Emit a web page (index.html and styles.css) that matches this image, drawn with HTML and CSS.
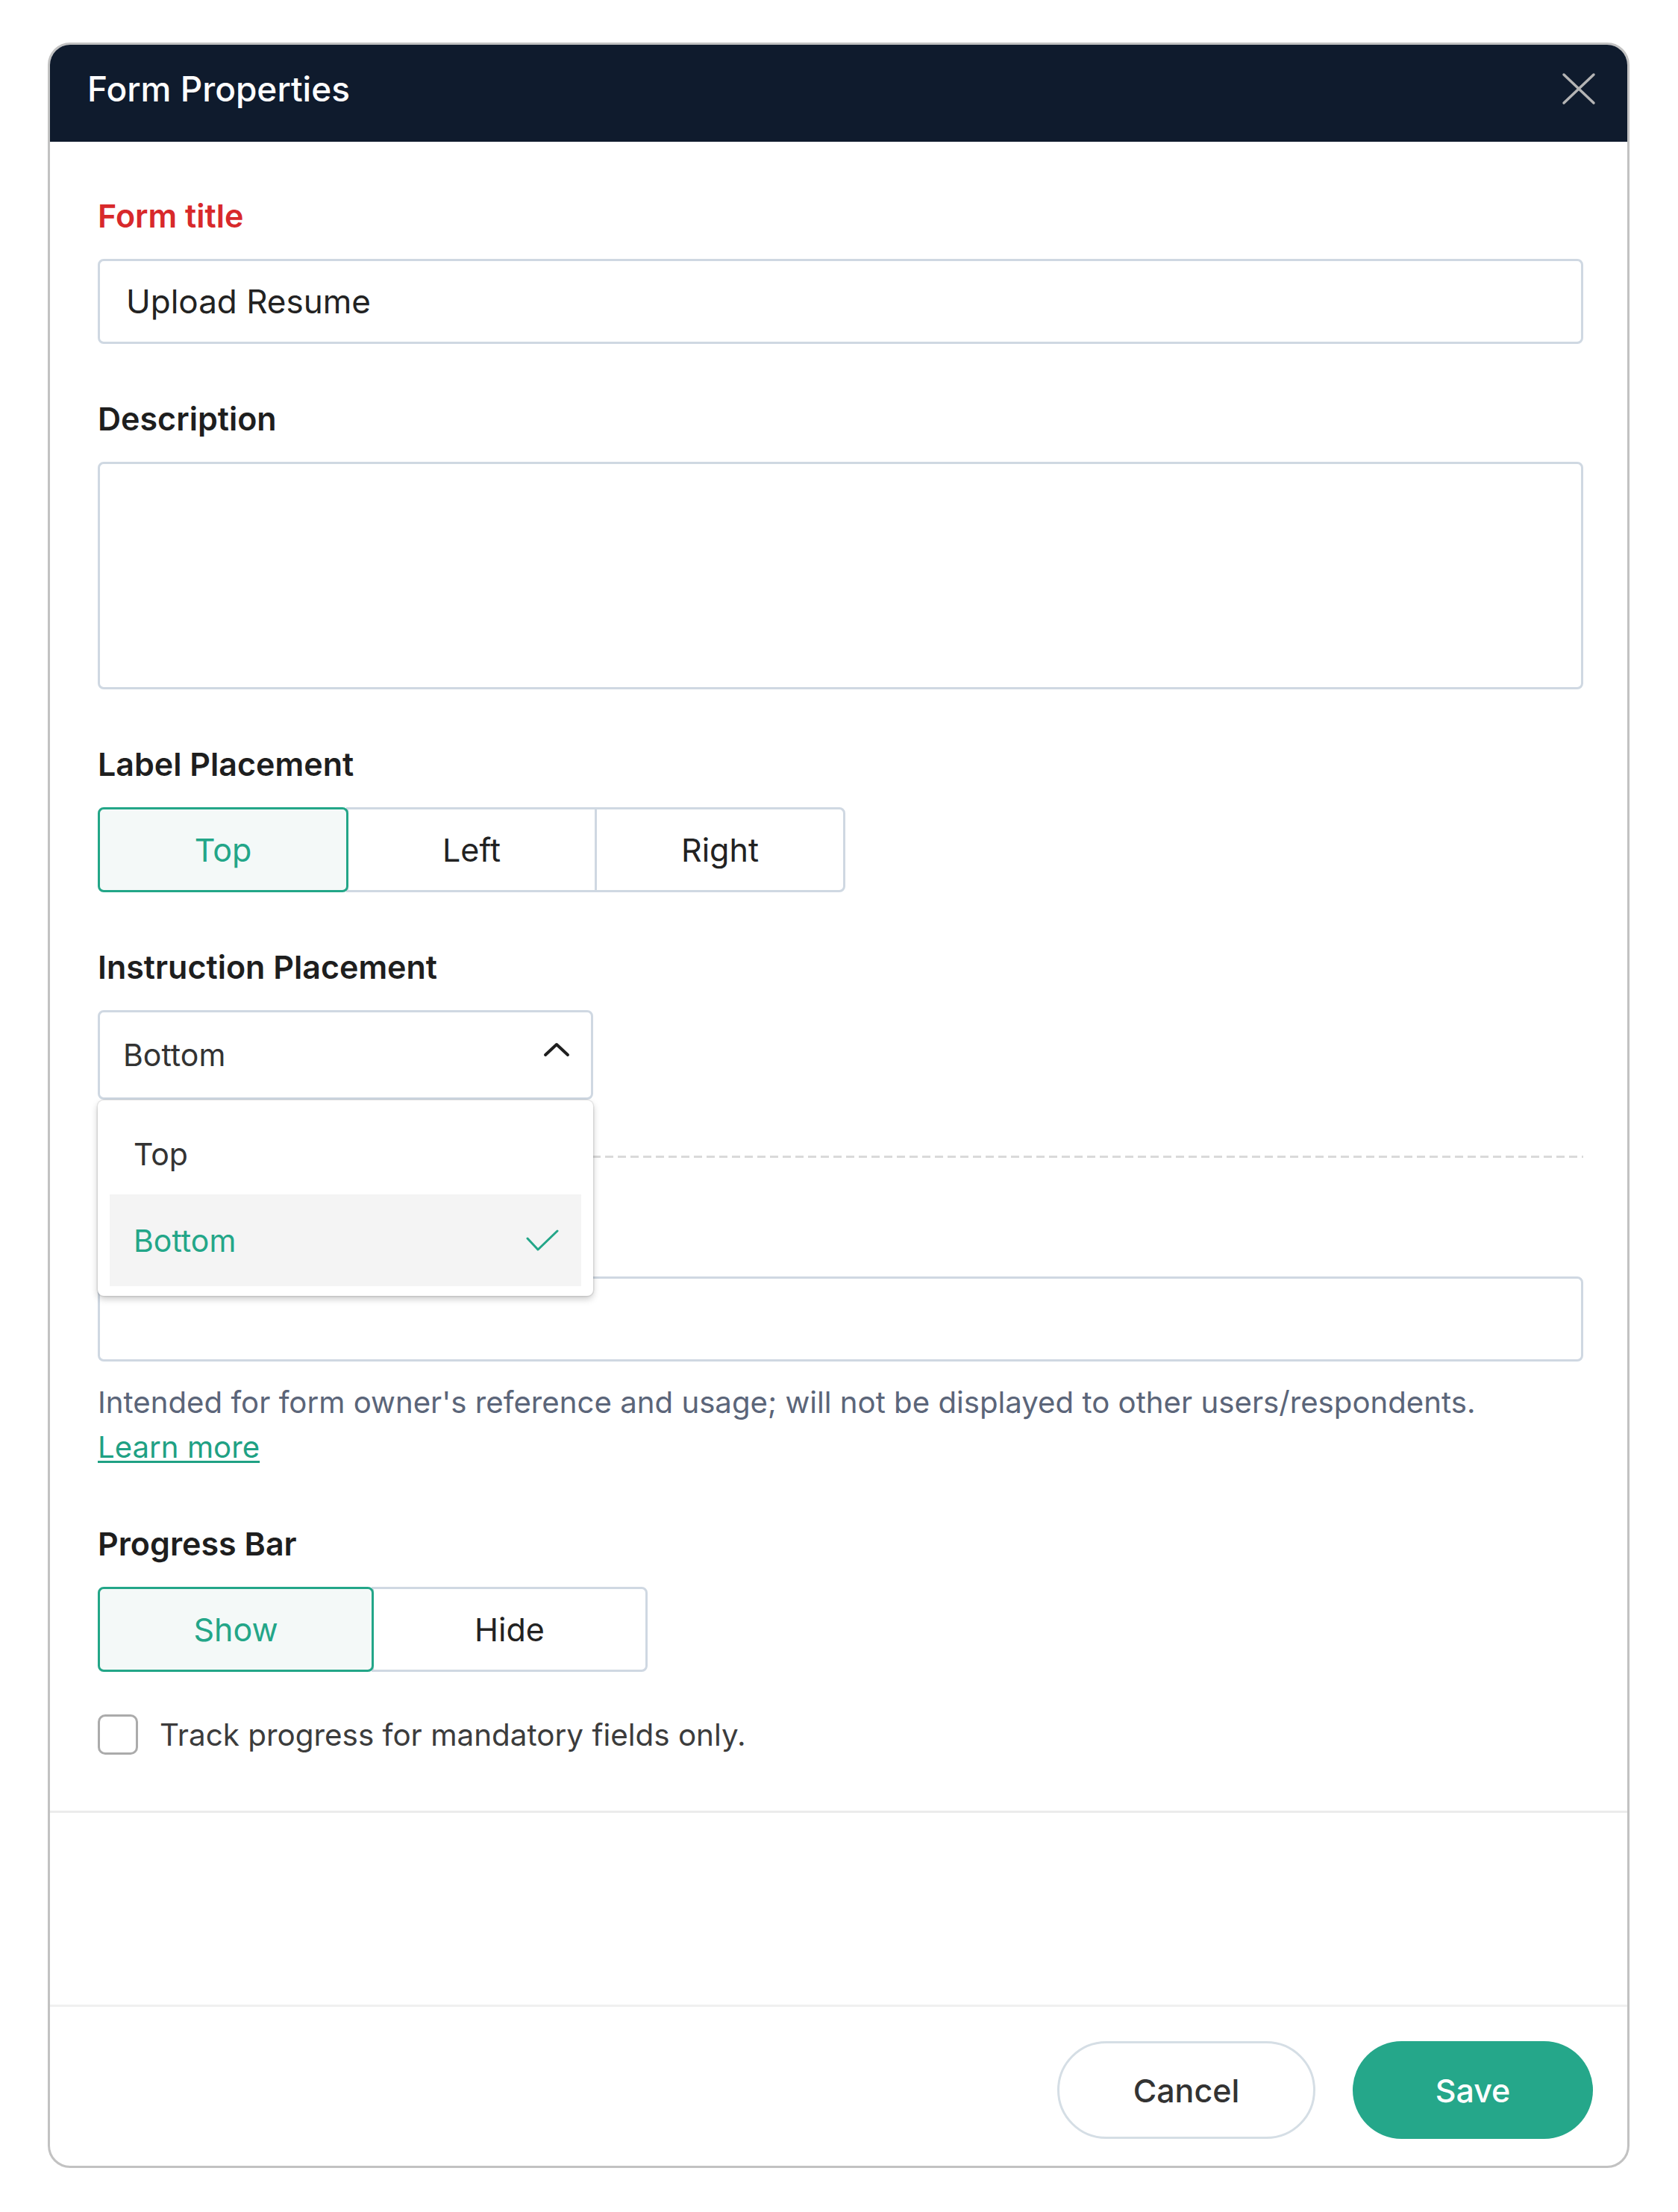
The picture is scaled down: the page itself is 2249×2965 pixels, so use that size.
FILE: index.html
```html
<!DOCTYPE html>
<html lang="en">
<head>
<meta charset="utf-8">
<title>Form Properties</title>
<link rel="stylesheet" href="styles.css">
</head>
<body>
<div class="dialog">
  <header class="dlg-header">
    <h1 class="dlg-title">Form Properties</h1>
    <button class="close-btn" aria-label="Close">
      <svg class="close-ico" viewBox="0 0 46 44" width="46" height="44"><path d="M3 3 L43 41 M43 3 L3 41"/></svg>
    </button>
  </header>

  <div class="dlg-body">
    <div class="field">
      <div class="lbl lbl-req">Form title</div>
      <div class="input">Upload Resume</div>
    </div>

    <div class="field">
      <div class="lbl">Description</div>
      <div class="textarea"></div>
    </div>

    <div class="field">
      <div class="lbl">Label Placement</div>
      <div class="seg seg-label">
        <button class="seg-btn on">Top</button>
        <button class="seg-btn">Left</button>
        <button class="seg-btn">Right</button>
      </div>
    </div>

    <div class="field field-select">
      <div class="lbl">Instruction Placement</div>
      <div class="select-wrap">
        <div class="select">
          <span class="select-val">Bottom</span>
          <svg class="chev" viewBox="0 0 36 20" width="36" height="20"><path d="M3 17 L18 3 L33 17"/></svg>
        </div>
        <ul class="menu">
          <li class="menu-item first">Top</li>
          <li class="menu-item sel">Bottom
            <svg class="check" viewBox="0 0 44 32" width="44" height="32"><path d="M2 13 L16 28 L42 3"/></svg>
          </li>
        </ul>
      </div>
    </div>

    <div class="divider"></div>

    <div class="field field-internal">
      <div class="lbl-space" aria-hidden="true"></div>
      <div class="input"></div>
      <p class="help">Intended for form owner's reference and usage; will not be displayed to other users/respondents.<br><a class="learn" href="#">Learn more</a></p>
    </div>

    <div class="field field-progress">
      <div class="lbl">Progress Bar</div>
      <div class="seg seg-progress">
        <button class="seg-btn on">Show</button>
        <button class="seg-btn">Hide</button>
      </div>
    </div>

    <label class="check-row">
      <span class="checkbox"></span>
      <span class="check-lbl">Track progress for mandatory fields only.</span>
    </label>
  </div>

  <div class="dlg-spacer"></div>

  <footer class="dlg-footer">
    <button class="btn btn-cancel">Cancel</button>
    <button class="btn btn-save">Save</button>
  </footer>
</div>
</body>
</html>
```

FILE: styles.css
```css
* { box-sizing: border-box; }

html, body {
  margin: 0;
  padding: 0;
  background: #ffffff;
}

body {
  font-family: "Inter", "Noto Sans", "Liberation Sans", sans-serif;
  color: #1e1e1e;
  padding: 57px 0 0 64px;
}

.dialog {
  width: 2120px;
  border: 3px solid #c2c2c2;
  border-radius: 30px;
  overflow: hidden;
  background: #ffffff;
}

/* Header */
.dlg-header {
  height: 130px;
  background: #0f1b2d;
  display: flex;
  align-items: center;
  justify-content: space-between;
  padding: 0 42px 12px 50px;
}

.dlg-title {
  margin: 0;
  font-size: 46px;
  font-weight: 500;
  color: #ffffff;
  line-height: 56px;
}

.close-btn {
  background: none;
  border: 0;
  padding: 0;
  margin: 0;
  display: flex;
  cursor: pointer;
}

.close-ico path {
  fill: none;
  stroke: #b4b4b4;
  stroke-width: 3.5;
  stroke-linecap: round;
}

/* Body */
.dlg-body {
  padding: 74px 59px 75px 64px;
  border-bottom: 3px solid #ebebeb;
}

.field { margin-bottom: 75px; }

.lbl {
  font-size: 43px;
  line-height: 50px;
  font-weight: 600;
  color: #1e1e1e;
  margin-bottom: 33px;
}

.lbl-space {
  height: 50px;
  margin-bottom: 33px;
}

.lbl-req { color: #d8292b; }

.input {
  height: 114px;
  border: 3px solid #cfd8e2;
  border-radius: 8px;
  padding: 0 35px;
  display: flex;
  align-items: center;
  font-size: 44px;
  color: #222222;
}

.textarea {
  height: 305px;
  border: 3px solid #cfd8e2;
  border-radius: 8px;
}

/* Segmented controls */
.seg { display: flex; }

.seg-btn {
  position: relative;
  height: 114px;
  border: 3px solid #cfd8e2;
  background: #ffffff;
  font-family: inherit;
  font-size: 43px;
  color: #222222;
  padding: 0;
  margin: 0;
  cursor: pointer;
}

.seg-btn + .seg-btn { margin-left: -3px; }
.seg-btn:first-child { border-radius: 8px 0 0 8px; }
.seg-btn:last-child { border-radius: 0 8px 8px 0; }

.seg-btn.on {
  z-index: 1;
  border-color: #23a688;
  background: #f4f9f8;
  color: #23a688;
  border-radius: 8px;
}

.seg-label .seg-btn { width: 336px; }
.seg-progress .seg-btn { width: 370px; }

/* Select with open menu */
.field-select { margin-bottom: 75px; }

.select-wrap {
  position: relative;
  width: 664px;
}

.select {
  height: 120px;
  border: 3px solid #cfd8e2;
  border-radius: 8px;
  padding: 0 28px 0 31px;
  display: flex;
  align-items: center;
  justify-content: space-between;
  font-size: 41px;
  color: #333333;
}

.chev { margin-top: -14px; }
.chev path {
  fill: none;
  stroke: #1f1f1f;
  stroke-width: 4;
  stroke-linecap: round;
  stroke-linejoin: round;
}

.menu {
  position: absolute;
  z-index: 5;
  top: calc(100% + 1px);
  left: 0;
  width: 100%;
  margin: 0;
  list-style: none;
  padding: 6px 16px 13px;
  background: #ffffff;
  border-radius: 8px;
  box-shadow: 0 4px 10px rgba(0, 0, 0, 0.22), 0 0 0 1.5px rgba(0, 0, 0, 0.07);
}

.menu-item {
  height: 120px;
  display: flex;
  align-items: center;
  justify-content: space-between;
  padding: 0 30px 0 32px;
  font-size: 41px;
  color: #333333;
}

.menu-item.first { padding-top: 12px; }

.menu-item.sel {
  background: #f4f4f4;
  color: #23a688;
  height: 123px;
}

.check path {
  fill: none;
  stroke: #23a688;
  stroke-width: 3;
  stroke-linecap: round;
  stroke-linejoin: round;
}

/* Divider */
.divider {
  height: 3px;
  margin-bottom: 76px;
  background: repeating-linear-gradient(to right, #dadada 0 11px, transparent 11px 17px);
}

/* Help text */
.field-internal { margin-bottom: 74px; }

.help {
  margin: 25px 0 0;
  font-size: 40.2px;
  line-height: 60px;
  color: #5b6579;
}

.learn {
  color: #1fa184;
  text-decoration: underline;
  text-decoration-thickness: 3px;
  text-underline-offset: 4px;
}

/* Progress + checkbox */
.field-progress { margin-bottom: 57px; }

.check-row {
  display: flex;
  align-items: center;
  gap: 29px;
  height: 54px;
}

.checkbox {
  width: 54px;
  height: 54px;
  border: 3px solid #ababab;
  border-radius: 10px;
  flex: none;
}

.check-lbl {
  font-size: 40.4px;
  color: #3c3c3c;
}

/* Spacer + footer */
.dlg-spacer { height: 257px; }

.dlg-footer {
  border-top: 3px solid #f0f0f0;
  padding: 46px 46px 36px;
  display: flex;
  justify-content: flex-end;
  gap: 50px;
}

.btn {
  height: 131px;
  border-radius: 66px;
  font-family: inherit;
  font-size: 43px;
  font-weight: 500;
  cursor: pointer;
}

.btn-cancel {
  width: 346px;
  background: #ffffff;
  border: 3px solid #d5dee5;
  color: #333333;
}

.btn-save {
  width: 322px;
  background: #25a78a;
  border: 0;
  color: #ffffff;
}
```
